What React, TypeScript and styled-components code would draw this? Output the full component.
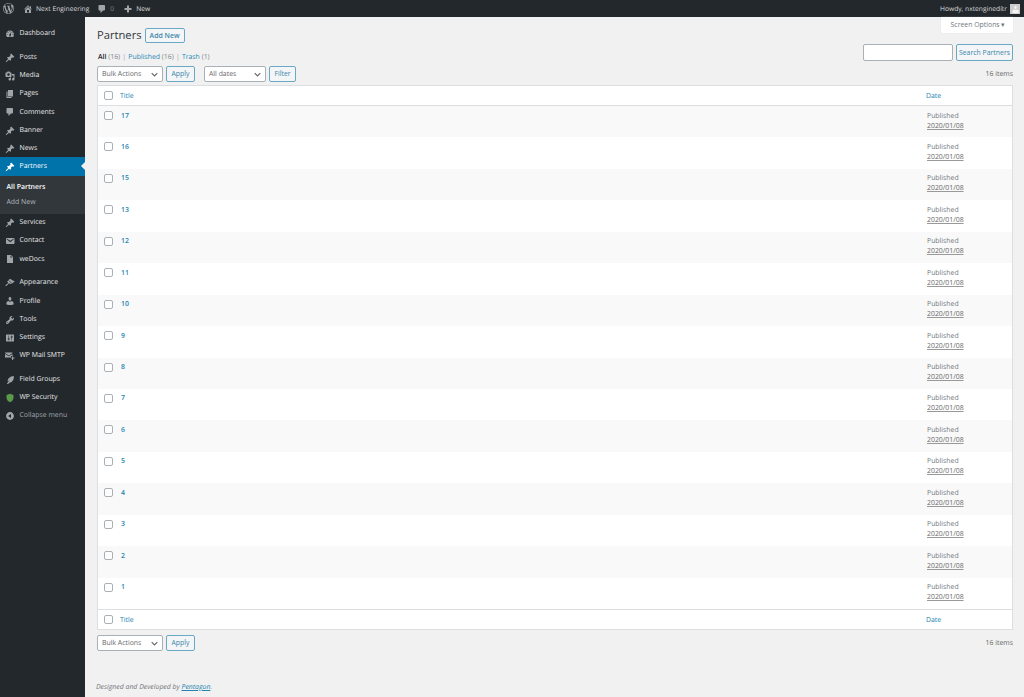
import styled, { createGlobalStyle } from "styled-components";

const GlobalStyle = createGlobalStyle`
  html, body { margin: 0; padding: 0; background: #f1f1f1; }
  body { font-family: "Open Sans", "Noto Sans", sans-serif; font-size: 6.9px; line-height: 1.4; color: #555; text-rendering: geometricPrecision; }
  a { color: #2585b2; text-decoration: none; }
`;

const ICONS: Record<string, string> = {
  wp: "M20 10c0-5.51-4.49-10-10-10C4.48 0 0 4.49 0 10c0 5.52 4.48 10 10 10 5.51 0 10-4.48 10-10zM7.78 15.37L4.37 6.22c.55-.02 1.17-.08 1.17-.08.5-.06.44-1.13-.06-1.11 0 0-1.45.11-2.37.11-.18 0-.37 0-.58-.01C4.12 2.69 6.87 1.11 10 1.11c2.33 0 4.45.87 6.05 2.34-.68-.11-1.65.39-1.65 1.58 0 .74.45 1.36.9 2.1.35.61.55 1.36.55 2.46 0 1.49-1.4 5-1.4 5l-3.03-8.37c.54-.02.82-.17.82-.17.5-.05.44-1.25-.06-1.22 0 0-1.44.12-2.38.12-.87 0-2.33-.12-2.33-.12-.5-.03-.56 1.2-.06 1.22l.92.08 1.26 3.41zM17.41 10c.24-.64.74-1.87.43-4.25.7 1.29 1.05 2.71 1.05 4.25 0 3.29-1.73 6.24-4.4 7.78.97-2.59 1.94-5.2 2.92-7.78zM6.1 18.09C3.12 16.65 1.11 13.53 1.11 10c0-1.3.23-2.48.72-3.59C3.25 10.3 4.67 14.2 6.1 18.09zm4.03-6.63l2.58 6.98c-.86.29-1.76.45-2.71.45-.79 0-1.57-.11-2.29-.33.81-2.38 1.62-4.74 2.42-7.1z",
  home: "M16 8.5l1.53 1.53-1.06 1.06L10 4.62l-6.47 6.47-1.06-1.06L10 2.5l4 4v-2h2v4zm-6-2.46l6 5.99V18H4v-5.97zM12 17v-5H8v5h4z",
  comment: "M5 2h9c1.1 0 2 .9 2 2v7c0 1.1-.9 2-2 2h-2l-5 5v-5H5c-1.1 0-2-.9-2-2V4c0-1.1.9-2 2-2z",
  plus: "M17 8v4h-5v5H8v-5H3V8h5V3h4v5h5z",
  dashboard: "M3.76 16h12.48c1.1-1.37 1.76-3.11 1.76-5 0-4.42-3.58-8-8-8s-8 3.58-8 8c0 1.89.66 3.63 1.76 5zM10 4c.55 0 1 .45 1 1s-.45 1-1 1-1-.45-1-1 .45-1 1-1zM6 6c.55 0 1 .45 1 1s-.45 1-1 1-1-.45-1-1 .45-1 1-1zm8 0c.55 0 1 .45 1 1s-.45 1-1 1-1-.45-1-1 .45-1 1-1zm-5.37 5.55L12 7v6c0 1.1-.9 2-2 2s-2-.9-2-2c0-.57.24-1.08.63-1.45zM4 10c.55 0 1 .45 1 1s-.45 1-1 1-1-.45-1-1 .45-1 1-1zm12 0c.55 0 1 .45 1 1s-.45 1-1 1-1-.45-1-1 .45-1 1-1zm-5 3c0-.55-.45-1-1-1s-1 .45-1 1 .45 1 1 1 1-.45 1-1z",
  pin: "M10.44 3.02l1.82-1.82 6.36 6.35-1.83 1.82c-1.05-.68-2.48-.57-3.41.36l-.75.75c-.92.93-1.04 2.35-.35 3.41l-1.83 1.82-2.41-2.41-2.8 2.79c-.42.42-3.38 2.71-3.8 2.29s1.86-3.39 2.28-3.81l2.79-2.79L4.1 9.36l1.83-1.82c1.05.69 2.48.57 3.4-.36l.75-.75c.93-.92 1.05-2.35.36-3.41z",
  media: "M13 11V4c0-.55-.45-1-1-1h-1.67L9 1H5L3.67 3H2c-.55 0-1 .45-1 1v7c0 .55.45 1 1 1h10c.55 0 1-.45 1-1zM7 4.5c1.38 0 2.5 1.12 2.5 2.5S8.38 9.5 7 9.5 4.5 8.38 4.5 7 5.62 4.5 7 4.5zM14 6h5v10.5c0 1.38-1.12 2.5-2.5 2.5S14 17.88 14 16.5s1.12-2.5 2.5-2.5c.17 0 .34.02.5.05V9h-3V6zm-4 8.05V13h2v3.5c0 1.38-1.12 2.5-2.5 2.5S7 17.88 7 16.5 8.12 14 9.5 14c.17 0 .34.02.5.05z",
  page: "M6 15V2h10v13H6zm-1 1h8v2H3V5h2v11z",
  email: "M3.87 4h13.25C18.37 4 19 4.59 19 5.79v8.42c0 1.19-.63 1.79-1.88 1.79H3.87c-1.25 0-1.88-.6-1.88-1.79V5.79c0-1.2.63-1.79 1.88-1.79zm6.62 8.6l6.74-5.53c.24-.2.43-.66.13-1.07-.29-.41-.82-.42-1.17-.17l-5.7 3.86L4.8 5.83c-.35-.25-.88-.24-1.17.17-.3.41-.11.87.13 1.07z",
  doc: "M4 2h8l4 4v12H4V2zm7 1v4h4l-4-4zM8 9v1.2L6.8 12 8 13.8V15l-2.2-3L8 9zm4 0l2.2 3-2.2 3v-1.2l1.2-1.8L12 10.2V9z",
  appearance: "M14.48 11.06L7.41 3.99l1.5-1.5c.5-.56 2.3-.47 3.51.32 1.21.8 1.43 1.28 2.91 2.1 1.18.64 2.45 1.26 4.45.85zm-.71.71L6.7 4.7 4.93 6.47c-.39.39-.39 1.02 0 1.41l1.06 1.06c.39.39.39 1.03 0 1.42-.6.6-1.43 1.11-2.21 1.69-.35.26-.7.53-1.01.84C1.43 13.23.4 14.98 1.1 15.68c.7.7 2.45-.33 3.8-1.67.31-.31.58-.66.84-1.01.58-.78 1.09-1.61 1.69-2.21.39-.39 1.02-.39 1.41 0l1.06 1.06c.39.39 1.02.39 1.41 0z",
  user: "M10 9.25c-2.27 0-2.73-3.44-2.73-3.44C7 4.02 7.82 2 9.97 2c2.16 0 2.98 2.02 2.71 3.81 0 0-.41 3.44-2.68 3.44zm0 2.57L12.72 10c2.39 0 4.52 2.33 4.52 4.53v2.49s-3.65 1.13-7.24 1.13c-3.65 0-7.24-1.13-7.24-1.13v-2.49c0-2.25 1.94-4.48 4.47-4.48z",
  tools: "M16.68 9.77c-1.34 1.34-3.3 1.67-4.95.99l-5.41 6.52c-.99.99-2.59.99-3.58 0s-.99-2.59 0-3.57l6.52-5.42c-.68-1.65-.35-3.61.99-4.95 1.28-1.28 3.12-1.62 4.72-1.06l-2.89 2.89 2.82 2.82 2.86-2.87c.53 1.58.18 3.39-1.08 4.65zM3.81 16.21c.4.39 1.04.39 1.43 0 .4-.4.4-1.04 0-1.43-.39-.4-1.03-.4-1.43 0-.39.39-.39 1.03 0 1.43z",
  settings: "M18 16V4c0-.55-.45-1-1-1H3c-.55 0-1 .45-1 1v12c0 .55.45 1 1 1h14c.55 0 1-.45 1-1zM8 11h1c.55 0 1 .45 1 1s-.45 1-1 1H8v1.5c0 .28-.22.5-.5.5s-.5-.22-.5-.5V13H6c-.55 0-1-.45-1-1s.45-1 1-1h1V5.5c0-.28.22-.5.5-.5s.5.22.5.5V11zm5-2h-1c-.55 0-1-.45-1-1s.45-1 1-1h1V5.5c0-.28.22-.5.5-.5s.5.22.5.5V7h1c.55 0 1 .45 1 1s-.45 1-1 1h-1v5.5c0 .28-.22.5-.5.5s-.5-.22-.5-.5V9z",
  smtp: "M0 3h15v1.2L7.5 9 0 4.2V3zm0 3l7.5 4.6L15 6v4h-3v3H0V6zm14 5h2v2h3v2h-3v3h-2v-3h-1v-2h1v-2z",
  feather: "M17.5 2c.6 3.5-.3 7.4-2.6 10.2-1.7 2.1-3.9 3-6.1 3.1L6.3 18H3.6l3.5-5.2L11 7.5l-5.4 6.1C4.9 11 5.9 8 8 6c2.7-2.5 6-3.8 9.5-4z",
  shield: "M10 1.5l7 2.5v5c0 4.5-3 7.8-7 9.5C6 16.8 3 13.5 3 9V4l7-2.5z",
  collapse: "M10 2.16c4.33 0 7.84 3.51 7.84 7.84s-3.51 7.84-7.84 7.84S2.16 14.33 2.16 10 5.71 2.16 10 2.16zm2 11.72V6.12L6.18 9.97z",
};

const Svg = styled.svg<{ $size: number }>`
  width: ${(p) => p.$size}px;
  height: ${(p) => p.$size}px;
  flex: none;
  fill: currentColor;
`;

function Icon({ name, size = 10 }: { name: string; size?: number }) {
  return (
    <Svg $size={size} viewBox="0 0 20 20">
      <path d={ICONS[name]} />
    </Svg>
  );
}

const Page = styled.div`
  width: 1024px;
  min-height: 697px;
  display: flex;
  flex-direction: column;
`;

const AdminBar = styled.header`
  box-sizing: border-box;
  height: 17px;
  background: #23282d;
  color: #ddd;
  font-size: 6.7px;
  display: flex;
  align-items: center;
  justify-content: space-between;
  padding: 0 4px 0 3px;
`;

const BarGroup = styled.div`
  display: flex;
  align-items: center;
`;

const BarItem = styled.span<{ $gap?: number }>`
  display: flex;
  align-items: center;
  gap: 3px;
  margin-right: ${(p) => p.$gap ?? 0}px;
  color: #ddd;
  svg { color: #a0a5aa; }
`;

const BarText = styled.span`
  padding-top: 1px;
`;

const Muted = styled(BarText)`
  color: #82878c;
`;

const Avatar = styled.span`
  width: 10px;
  height: 10px;
  margin-left: 3px;
  background: #ccc;
  color: #f4f4f4;
  display: flex;
  align-items: flex-end;
  justify-content: center;
`;

const Body = styled.div`
  flex: 1;
  display: flex;
`;

const Sidebar = styled.nav`
  width: 85px;
  flex: none;
  background: #23282d;
  padding-top: 7.5px;
`;

const MenuGroup = styled.div`
  margin-bottom: 5.5px;
`;

const MenuItem = styled.a<{ $active?: boolean; $dim?: boolean }>`
  position: relative;
  box-sizing: border-box;
  height: 18.2px;
  padding: 1px 0 0 4.5px;
  display: flex;
  align-items: center;
  gap: 5px;
  background: ${(p) => (p.$active ? "#0073aa" : "transparent")};
  color: ${(p) => (p.$active ? "#fff" : p.$dim ? "#a0a5aa" : "#e6e6e6")};
  svg { color: ${(p) => (p.$active ? "#fff" : "#a0a5aa")}; }
  ${(p) =>
    p.$active &&
    `&::after {
      content: "";
      position: absolute;
      right: 0;
      top: 5px;
      border: 4px solid transparent;
      border-right-color: #f1f1f1;
      border-left-width: 0;
    }`}
`;

const SubMenu = styled.div`
  background: #32373c;
  padding: 4px 0;
`;

const SubItem = styled.a<{ $current?: boolean }>`
  display: block;
  height: 15px;
  line-height: 15px;
  padding-left: 6.5px;
  color: ${(p) => (p.$current ? "#fff" : "#b4b9be")};
  font-weight: ${(p) => (p.$current ? 600 : 400)};
`;

const Main = styled.main`
  flex: 1;
  position: relative;
  padding: 0 11px 0 12px;
  display: flex;
  flex-direction: column;
`;

const ScreenTab = styled.button`
  position: absolute;
  top: 0;
  right: 11px;
  width: 72px;
  height: 16px;
  border: 0;
  border-radius: 0 0 2px 2px;
  background: #fff;
  box-shadow: 0 0 1px #ccd0d4;
  color: #72777c;
  font: inherit;
  padding: 0 0 0 2px;
`;

const Heading = styled.div`
  display: flex;
  align-items: center;
  gap: 3px;
  margin-top: 11px;
  height: 15px;
`;

const Title = styled.h1`
  margin: 0;
  font-size: 11.2px;
  font-weight: 400;
  color: #32373c;
  line-height: 15px;
`;

const Btn = styled.button<{ $width: number }>`
  width: ${(p) => p.$width}px;
  height: 16px;
  padding: 0;
  border: 1px solid #6aa9c6;
  border-radius: 2px;
  background: #f3f5f6;
  color: #3d87ab;
  font: inherit;
`;

const AddBtn = styled(Btn)`
  height: 15px;
  font-weight: 600;
`;

const StatusRow = styled.div`
  display: flex;
  justify-content: space-between;
  align-items: flex-start;
  height: 8px;
  margin-top: 10px;
  padding-left: 1px;
  line-height: 10px;
  color: #82878c;
`;

const Links = styled.div`
  b { color: #222; font-weight: 600; }
  i { font-style: normal; color: #a0a5aa; margin: 0 2.2px; }
`;

const SearchBox = styled.div`
  display: flex;
  gap: 3px;
  margin-top: -9px;
`;

const SearchInput = styled.input`
  box-sizing: border-box;
  width: 90px;
  height: 17px;
  padding: 0;
  background: #fff;
  border: 1px solid #a9b0b6;
  border-radius: 2px;
`;

const SearchBtn = styled(Btn)`
  height: 17px;
`;

const Actions = styled.div<{ $mt: number }>`
  display: flex;
  align-items: center;
  height: 16px;
  margin-top: ${(p) => p.$mt}px;
`;

const Select = styled.span<{ $width: number; $ml?: number }>`
  box-sizing: border-box;
  width: ${(p) => p.$width}px;
  height: 16px;
  margin: 0 3px 0 ${(p) => p.$ml ?? 0}px;
  padding: 1px 4px 0;
  border: 1px solid #a9b0b6;
  border-radius: 2px;
  background: #fff;
  color: #666;
  display: flex;
  align-items: center;
  justify-content: space-between;
  svg { width: 7px; height: 7px; fill: none; stroke: #666; stroke-width: 1.6; }
`;

const Count = styled.span`
  margin-left: auto;
  padding-top: 1px;
  color: #666;
`;

const Table = styled.table`
  margin-top: 3px;
  width: 100%;
  table-layout: fixed;
  border-collapse: separate;
  border-spacing: 0;
  background: #fff;
  border: 1px solid #dcdfe1;
  box-sizing: border-box;
`;

const CheckCol = styled.col`
  width: 22px;
`;

const DateCol = styled.col`
  width: 86px;
`;

const HeadCell = styled.th<{ $bottom?: boolean }>`
  height: 19px;
  padding: 0;
  text-align: left;
  font-weight: 400;
  vertical-align: middle;
  ${(p) => (p.$bottom ? "border-top" : "border-bottom")}: 1px solid #dcdfe1;
`;

const HeadLink = styled.a`
  display: block;
  padding-top: 2px;
`;

const Row = styled.tr<{ $striped: boolean }>`
  height: 31.45px;
  background: ${(p) => (p.$striped ? "#f9f9f9" : "#fff")};
`;

const Cell = styled.td`
  padding: 0;
  vertical-align: top;
`;

const Check = styled.span<{ $top?: number }>`
  display: block;
  box-sizing: border-box;
  width: 9px;
  height: 9px;
  margin: ${(p) => p.$top ?? 0}px 0 0 5.5px;
  background: #fff;
  border: 1px solid #a9b0b6;
  border-radius: 2px;
`;

const RowTitle = styled.a`
  display: block;
  margin: 5.5px 0 0 1px;
  font-weight: 600;
`;

const DateText = styled.div`
  margin: 5.5px 0 0 1px;
  color: #72777c;
  line-height: 10px;
  abbr { display: block; text-decoration: underline solid #999; color: #666; }
`;

const Footer = styled.footer`
  margin: 32px 0 0 -1px;
  font-style: italic;
  color: #72777c;
  height: 12px;
  a { text-decoration: underline; }
`;

const ShieldTint = styled.span`
  display: flex;
  svg { color: #5a9a4a; }
`;

const Chevron = () => (
  <svg viewBox="0 0 10 10">
    <path d="M1 3l4 4 4-4" />
  </svg>
);

type Entry = { icon: string; label: string; active?: boolean; dim?: boolean; sub?: boolean };

const MENU: Entry[][] = [
  [{ icon: "dashboard", label: "Dashboard" }],
  [
    { icon: "pin", label: "Posts" },
    { icon: "media", label: "Media" },
    { icon: "page", label: "Pages" },
    { icon: "comment", label: "Comments" },
    { icon: "pin", label: "Banner" },
    { icon: "pin", label: "News" },
    { icon: "pin", label: "Partners", active: true, sub: true },
    { icon: "pin", label: "Services" },
    { icon: "email", label: "Contact" },
    { icon: "doc", label: "weDocs" },
  ],
  [
    { icon: "appearance", label: "Appearance" },
    { icon: "user", label: "Profile" },
    { icon: "tools", label: "Tools" },
    { icon: "settings", label: "Settings" },
    { icon: "smtp", label: "WP Mail SMTP" },
  ],
  [
    { icon: "feather", label: "Field Groups" },
    { icon: "shield", label: "WP Security" },
    { icon: "collapse", label: "Collapse menu", dim: true },
  ],
];

const ROWS = [17, 16, 15, 13, 12, 11, 10, 9, 8, 7, 6, 5, 4, 3, 2, 1];

export default function App() {
  return (
    <Page>
      <GlobalStyle />
      <AdminBar>
        <BarGroup>
          <BarItem $gap={9}>
            <Icon name="wp" size={11} />
          </BarItem>
          <BarItem $gap={8}>
            <Icon name="home" />
            <BarText>Next Engineering</BarText>
          </BarItem>
          <BarItem $gap={9}>
            <Icon name="comment" />
            <Muted>0</Muted>
          </BarItem>
          <BarItem>
            <Icon name="plus" />
            <BarText>New</BarText>
          </BarItem>
        </BarGroup>
        <BarGroup>
          <BarText>Howdy, nxtenginedítr</BarText>
          <Avatar>
            <Icon name="user" size={9} />
          </Avatar>
        </BarGroup>
      </AdminBar>
      <Body>
        <Sidebar>
          {MENU.map((group) => (
            <MenuGroup key={group[0].label}>
              {group.map((item) => (
                <div key={item.label}>
                  <MenuItem $active={item.active} $dim={item.dim}>
                    {item.icon === "shield" ? (
                      <ShieldTint>
                        <Icon name="shield" />
                      </ShieldTint>
                    ) : (
                      <Icon name={item.icon} />
                    )}
                    {item.label}
                  </MenuItem>
                  {item.sub && (
                    <SubMenu>
                      <SubItem $current>All Partners</SubItem>
                      <SubItem>Add New</SubItem>
                    </SubMenu>
                  )}
                </div>
              ))}
            </MenuGroup>
          ))}
        </Sidebar>
        <Main>
          <ScreenTab>Screen Options ▾</ScreenTab>
          <Heading>
            <Title>Partners</Title>
            <AddBtn $width={40}>Add New</AddBtn>
          </Heading>
          <StatusRow>
            <Links>
              <b>All</b> (16)<i>|</i>
              <a>Published</a> (16)<i>|</i>
              <a>Trash</a> (1)
            </Links>
            <SearchBox>
              <SearchInput />
              <SearchBtn $width={57}>Search Partners</SearchBtn>
            </SearchBox>
          </StatusRow>
          <Actions $mt={5}>
            <Select $width={66}>
              Bulk Actions
              <Chevron />
            </Select>
            <Btn $width={29}>Apply</Btn>
            <Select $width={62} $ml={9}>
              All dates
              <Chevron />
            </Select>
            <Btn $width={27}>Filter</Btn>
            <Count>16 items</Count>
          </Actions>
          <Table>
            <colgroup>
              <CheckCol />
              <col />
              <DateCol />
            </colgroup>
            <thead>
              <tr>
                <HeadCell>
                  <Check />
                </HeadCell>
                <HeadCell>
                  <HeadLink>Title</HeadLink>
                </HeadCell>
                <HeadCell>
                  <HeadLink>Date</HeadLink>
                </HeadCell>
              </tr>
            </thead>
            <tbody>
              {ROWS.map((n, i) => (
                <Row key={n} $striped={i % 2 === 0}>
                  <Cell>
                    <Check $top={5} />
                  </Cell>
                  <Cell>
                    <RowTitle>{n}</RowTitle>
                  </Cell>
                  <Cell>
                    <DateText>
                      Published
                      <abbr>2020/01/08</abbr>
                    </DateText>
                  </Cell>
                </Row>
              ))}
            </tbody>
            <tfoot>
              <tr>
                <HeadCell $bottom>
                  <Check />
                </HeadCell>
                <HeadCell $bottom>
                  <HeadLink>Title</HeadLink>
                </HeadCell>
                <HeadCell $bottom>
                  <HeadLink>Date</HeadLink>
                </HeadCell>
              </tr>
            </tfoot>
          </Table>
          <Actions $mt={5}>
            <Select $width={66}>
              Bulk Actions
              <Chevron />
            </Select>
            <Btn $width={29}>Apply</Btn>
            <Count>16 items</Count>
          </Actions>
          <Footer>
            Designed and Developed by <a>Pentagon</a>.
          </Footer>
        </Main>
      </Body>
    </Page>
  );
}
